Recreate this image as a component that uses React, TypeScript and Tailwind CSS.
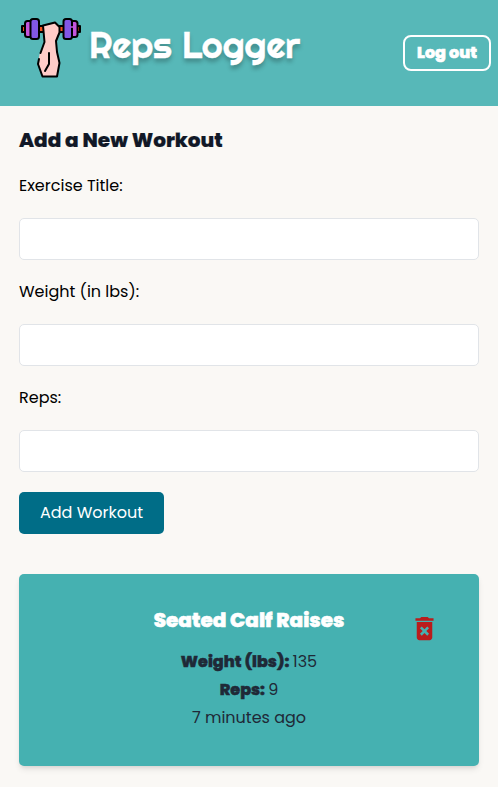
import React from "react";
import { MdDeleteForever } from "react-icons/md";

function DumbbellLogo() {
  return (
    <svg className="block h-[60px] w-[60px] shrink-0" viewBox="0 0 60 60" fill="none" stroke="#000" strokeWidth="2" strokeLinejoin="round" strokeLinecap="round">
      <path d="M1 8h58v6H1z" fill="#f4511e" />
      <rect x="4" y="3" width="9" height="16" rx="2.5" fill="#c455dc" />
      <rect x="9.500" y="1" width="8.500" height="20" rx="2.5" fill="#8257e5" />
      <rect x="48" y="3" width="8.500" height="16" rx="2.5" fill="#c455dc" />
      <rect x="42.500" y="1" width="8.500" height="20" rx="2.5" fill="#8257e5" />
      <path d="M22 7.500l12-3 4.500 4.500v5.500L35 23l1 11 2.500 11L36 58.500H21.500L17 46l1.500-9.500L23.500 24z" fill="#ffccc8" stroke="none" />
      <path d="M19.500 35L23.500 24 22 7.500l12-3 4.500 4.500v5.500L35 23l1 11 2.500 11L36 58.500H21.500L17 46l1-5" />
      <path d="M28 35v11l-4 7" />
      <path d="M50 9h4" stroke="#c455dc" strokeWidth="1.5" />
    </svg>
  );
}

function Field({ label, id }: { label: string; id: string }) {
  return (
    <div className="mb-5">
      <label htmlFor={id} className="block h-6 text-[16px] leading-6 text-black">
        {label}
      </label>
      <input id={id} className="mt-5 block h-[42px] w-full rounded-[5px] border border-[#e1e4e8] bg-white px-3 outline-none" />
    </div>
  );
}

export default function App() {
  return (
    <div className="min-h-[787px] bg-[#faf8f5] font-[Poppins,Inter,sans-serif]">
      <header className="flex h-[106px] items-start justify-between bg-[#57b8b8] pl-[21px] pr-[7px]">
        <div className="flex items-start pt-[18px]">
          <DumbbellLogo />
          <h1 className="ml-[8px] mt-[4px] whitespace-nowrap font-[Righteous,Lato,sans-serif] text-[36px] font-normal leading-[46px] text-white [text-shadow:0px_4px_4px_rgba(0,0,0,0.25)] [-webkit-text-stroke:0.3px_white]">
            Reps Logger
          </h1>
        </div>
        <button className="mt-[35px] h-9 w-[88px] whitespace-nowrap rounded-lg border-2 border-white text-[16px] font-extrabold leading-8 text-white [-webkit-text-stroke:0.6px_currentColor]">
          Log out
        </button>
      </header>
      <main className="px-[19px] pt-5">
        <h2 className="mb-5 h-7 whitespace-nowrap text-[20px] font-extrabold leading-7 text-[#111827] [-webkit-text-stroke:0.2px_currentColor]">
          Add a New Workout
        </h2>
        <form>
          <Field label="Exercise Title:" id="title" />
          <Field label="Weight (in lbs):" id="weight" />
          <Field label="Reps:" id="reps" />
          <button type="button" className="block h-[42px] w-[145px] whitespace-nowrap rounded-[5px] bg-[#006d87] text-[16px] text-white">
            Add Workout
          </button>
        </form>
        <article className="mt-10 flex h-[192px] rounded-[5px] bg-[#45b1b1] pt-8 text-center text-[16px] leading-7 text-[#1f2937] shadow-md">
          <div className="w-[71px]" />
          <div className="flex-1 whitespace-nowrap">
            <h3 className="mb-[14px] text-[20px] font-extrabold leading-7 text-white [-webkit-text-stroke:0.6px_currentColor]">Seated Calf Raises</h3>
            <p><strong className="font-extrabold [-webkit-text-stroke:0.5px_currentColor]">Weight (lbs):</strong><span className="-ml-px"> 135</span></p>
            <p><strong className="font-extrabold [-webkit-text-stroke:0.5px_currentColor]">Reps:</strong><span className="-ml-px"> 9</span></p>
            <p>7 minutes ago</p>
          </div>
          <button aria-label="Delete workout" className="mr-[39px] mt-[6px] flex h-8 w-8 items-center justify-center text-[#b91c1c]">
            <MdDeleteForever size={31} />
          </button>
        </article>
      </main>
    </div>
  );
}
